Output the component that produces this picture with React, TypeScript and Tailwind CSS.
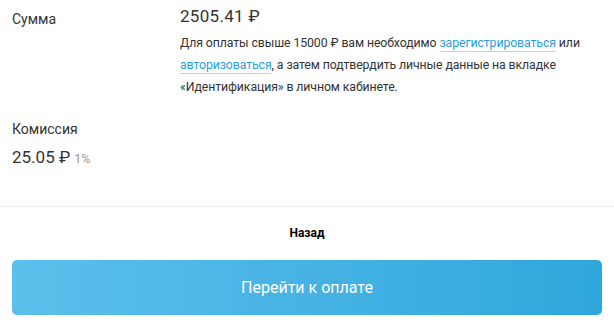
import React from "react";

const font = { fontFamily: "Roboto, 'Noto Sans', sans-serif" };

function Link({ children }: { children: React.ReactNode }) {
  return (
    <a className="text-[#2b9fd6] underline decoration-[#a6dcf1] underline-offset-[4px] cursor-pointer">
      {children}
    </a>
  );
}

export default function App() {
  return (
    <div className="w-[614px] h-[327px] bg-white text-[#333]" style={font}>
      <div className="px-3 pt-[6px]">
        <div className="flex">
          <div className="w-[168px] pt-[3px] text-[14px] leading-[20px]">Сумма</div>
          <div className="flex-1">
            <div className="text-[17px] leading-[20px] tracking-[0.3px]">2505.41 ₽</div>
            <p className="mt-[6px] text-[12.3px] leading-[22px] tracking-[-0.1px]">
              Для оплаты свыше 15000 ₽ вам необходимо <Link>зарегистрироваться</Link> или
              <br />
              <Link>авторизоваться</Link>, а затем подтвердить личные данные на вкладке
              <br />
              «Идентификация» в личном кабинете.
            </p>
          </div>
        </div>
        <div className="mt-[21px] text-[14px] leading-[20px]">Комиссия</div>
        <div className="mt-[8px] text-[17px] leading-[20px] flex items-baseline gap-[4px]">
          <span>25.05 ₽</span>
          <span className="text-[12.5px] text-[#9a9a9a]">1%</span>
        </div>
      </div>
      <div className="mt-[37px] border-t border-[#ececec]" />
      <div className="h-[52px] flex items-center justify-center text-[12px] font-bold text-black">
        Назад
      </div>
      <div className="px-3">
        <button className="mt-[1px] w-full h-[55px] rounded-[5px] bg-gradient-to-r from-[#5bc0ec] to-[#2ea6dc] text-white text-[16px]">
          Перейти к оплате
        </button>
      </div>
    </div>
  );
}
